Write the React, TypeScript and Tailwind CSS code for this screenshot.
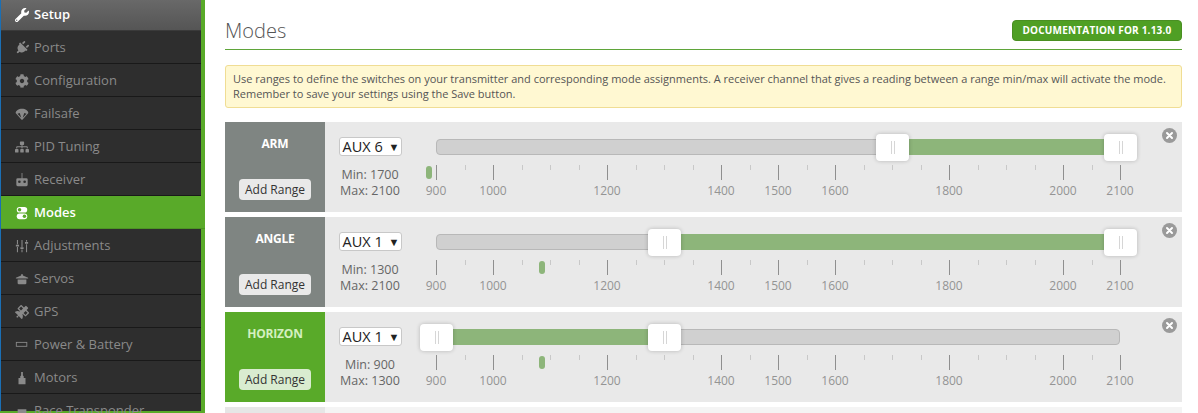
import { FaWrench, FaPlug, FaCog, FaSitemap, FaSatellite } from "react-icons/fa";
import type { ReactNode } from "react";

const NAV = [
  { label: "Setup", state: "top" },
  { label: "Ports" },
  { label: "Configuration" },
  { label: "Failsafe" },
  { label: "PID Tuning" },
  { label: "Receiver" },
  { label: "Modes", state: "active" },
  { label: "Adjustments" },
  { label: "Servos" },
  { label: "GPS" },
  { label: "Power & Battery" },
  { label: "Motors" },
  { label: "Race Transponder" },
];

function NavIcon({ label }: { label: string }) {
  const cls = "w-[14px] h-[14px]";
  const map: Record<string, ReactNode> = {
    Setup: <FaWrench className={cls} />,
    Ports: <FaPlug className={`${cls} rotate-45`} />,
    Configuration: <FaCog className={cls} />,
    Failsafe: (
      <svg className={cls} viewBox="0 0 16 16" fill="currentColor">
        <path d="M8 2C4 2 1 4.300 .7 6.800L7.500 14.500h1L15.300 6.800C15 4.300 12 2 8 2zM2.800 7.800l2.600-.9 1.800 5.300zM13.200 7.800l-4.400 4.400 1.800-5.300z" />
      </svg>
    ),
    "PID Tuning": <FaSitemap className={cls} />,
    Receiver: (
      <svg className={cls} viewBox="0 0 16 16" fill="currentColor">
        <path d="M7.500 0h1v6H13a1.500 1.500 0 0 1 1.500 1.500v6A1.500 1.500 0 0 1 13 15H3a1.500 1.500 0 0 1-1.500-1.500v-6A1.500 1.500 0 0 1 3 6h4.500z" />
        <circle cx="5" cy="10" r="1.500" fill="#2e2e2e" />
        <circle cx="11" cy="10" r="1.500" fill="#2e2e2e" />
      </svg>
    ),
    Modes: (
      <svg className={cls} viewBox="0 0 16 16" fill="currentColor">
        <rect x="2" y="1" width="12" height="6.500" rx="3.250" />
        <rect x="2" y="8.500" width="12" height="6.500" rx="3.250" />
        <circle cx="5.200" cy="4.250" r="2" fill="#59aa29" />
        <circle cx="10.800" cy="11.750" r="2" fill="#59aa29" />
      </svg>
    ),
    Adjustments: (
      <svg className={cls} viewBox="0 0 16 16" fill="currentColor">
        <path d="M2.200 1h1.200v5h-1.200zM1 6.500h3.600v2H1zM2.200 9h1.200v6h-1.200zM7.400 1h1.200v8h-1.200zM6.200 9.500h3.600v2H6.200zM7.400 12h1.200v3h-1.200zM12.600 1h1.200v2h-1.200zM11.400 3.500H15v2h-3.600zM12.600 6h1.200v9h-1.200z" />
      </svg>
    ),
    Servos: (
      <svg className={cls} viewBox="0 0 16 16" fill="currentColor">
        <path d="M7 2.500h2v1.500l6 2.500v1H1v-1l6-2.500zM3 8.500h10v4.500l-1 1H4l-1-1z" />
      </svg>
    ),
    GPS: <FaSatellite className={cls} />,
    "Power & Battery": (
      <svg className={cls} viewBox="0 0 16 16" fill="none" stroke="currentColor" strokeWidth="1">
        <rect x="1.500" y="5" width="12" height="4.500" />
      </svg>
    ),
    Motors: (
      <svg className={cls} viewBox="0 0 16 16" fill="currentColor">
        <path d="M7 1h2v4l1 1v2h2v7H4V8h2V6l1-1z" />
      </svg>
    ),
    "Race Transponder": (
      <svg className={cls} viewBox="0 0 16 16" fill="currentColor">
        <path d="M3 6h10v6H3z" />
      </svg>
    ),
  };
  return <span className="flex justify-center w-[15px] shrink-0 mr-[5px]">{map[label]}</span>;
}

function Sidebar() {
  return (
    <nav className="w-[205px] shrink-0 h-[413px] overflow-hidden bg-[#59aa29] pr-[4px]">
      <div className="border-l border-[#1a6fb5] h-full bg-[#2e2e2e] -mt-[2px]">
        {NAV.map((item) => {
          const active = item.state === "active";
          const top = item.state === "top";
          return (
            <div
              key={item.label}
              className={`h-[33px] flex items-center pl-[13px] pt-[1px] text-[13px] border-b ${
                active
                  ? "bg-[#59aa29] text-white border-[#4d9424] -mr-[4px]"
                  : top
                    ? "bg-gradient-to-b from-[#6a6a6a] to-[#555555] text-white font-semibold border-[#3a3a3a]"
                    : "text-[#8a8a8a] border-[#191919]"
              }`}
            >
              <NavIcon label={item.label} />
              <span className={active ? "font-semibold" : ""}>{item.label}</span>
            </div>
          );
        })}
      </div>
    </nav>
  );
}

const TICK_MAJOR = [900, 1000, 1200, 1400, 1500, 1600, 1800, 2000, 2100];
const TICK_MINOR = [950, 1050, 1100, 1150, 1250, 1300, 1350, 1450, 1550, 1650, 1700, 1750, 1850, 1900, 1950, 2050];

const toPct = (v: number) => `${((v - 900) / 1200) * 100}%`;

function Handle({ value }: { value: number }) {
  return (
    <div
      className="absolute top-[-5px] w-[33px] h-[27px] -ml-[16px] bg-white rounded-[4px] shadow-[0_0_4px_rgba(0,0,0,0.22)] flex items-center justify-center gap-[2px]"
      style={{ left: toPct(value) }}
    >
      <span className="w-px h-[13px] bg-[#d6d6d6]" />
      <span className="w-px h-[13px] bg-[#d6d6d6]" />
    </div>
  );
}

function RangeSlider({ min, max, marker }: { min: number; max: number; marker: number }) {
  return (
    <div className="relative w-[684px] ml-[26px] mt-[17px] shrink-0">
      <div className="relative h-[16px] rounded-[4px] bg-[#d0d0d0] border border-[#b8b8b8]">
        <div
          className="absolute -top-px -bottom-px bg-[#8db57a]"
          style={{ left: toPct(min), width: `${((max - min) / 1200) * 100}%` }}
        />
      </div>
      <Handle value={min} />
      <Handle value={max} />
      <div className="relative h-[40px] mt-[4px]">
        {TICK_MINOR.map((v) => (
          <span key={v} className="absolute top-[6px] w-px h-[5px] bg-[#c8c8c8]" style={{ left: toPct(v) }} />
        ))}
        {TICK_MAJOR.map((v) => (
          <span key={v} className="absolute top-[6px] w-px h-[15px] bg-[#8f8f8f]" style={{ left: toPct(v) }} />
        ))}
        {TICK_MAJOR.map((v) => (
          <span
            key={v}
            className="absolute top-[24px] -translate-x-1/2 text-[12px] leading-[16px] text-[#949494]"
            style={{ left: toPct(v) }}
          >
            {v}
          </span>
        ))}
        <span
          className="absolute top-[7px] -ml-[3px] w-[6px] h-[13px] rounded-[3px] bg-[#8db57a]"
          style={{ left: toPct(marker) }}
        />
      </div>
    </div>
  );
}

function ModeRow({ name, aux, min, max, marker, active }: { name: string; aux: string; min: number; max: number; marker: number; active?: boolean }) {
  return (
    <div className="relative flex h-[90px] bg-[#e9e9e9] mb-[5px]">
      <div className={`w-[100px] shrink-0 flex flex-col items-center ${active ? "bg-[#59aa29]" : "bg-[#7f8582]"}`}>
        <div className={`mt-[14px] h-[16px] leading-[16px] text-[12px] font-bold tracking-[-0.2px] ${active ? "text-[#d4f0c0]" : "text-white"}`}>{name}</div>
        <button className={`mt-[27px] h-[21px] w-[72px] rounded-[4px] text-[12px] text-[#333] ${active ? "bg-[#d9ecd0]" : "bg-[#e9e9e9]"}`}>
          Add Range
        </button>
      </div>
      <div className="w-[80px] ml-[5px] shrink-0 flex flex-col items-center">
        <div className="mt-[15px] h-[19px] w-[63px] border border-[#c8c8c8] rounded-[3px] bg-white text-[14.500px] leading-[17px] text-[#222] pl-[3px] whitespace-nowrap">
          {aux} <span className="ml-[2px] text-[11px] align-[1px]">▼</span>
        </div>
        <div className="mt-[11px] text-[12.500px] leading-[16px] text-[#666] text-center">
          <div>Min: {min}</div>
          <div>Max: {max}</div>
        </div>
      </div>
      <RangeSlider min={min} max={max} marker={marker} />
      <svg className="absolute top-[6px] right-[5px] w-[15px] h-[15px]" viewBox="0 0 15 15">
        <circle cx="7.500" cy="7.500" r="7.500" fill="#9a9a9a" />
        <path d="M5 5l5 5M10 5l-5 5" stroke="#fff" strokeWidth="2" strokeLinecap="round" />
      </svg>
    </div>
  );
}

export default function App() {
  return (
    <div className="flex w-[1198px] h-[413px] overflow-hidden bg-white font-['Open_Sans',sans-serif]">
      <Sidebar />
      <main className="flex-1 pl-[20px] pr-[16px] min-w-0">
        <div className="h-[50px] border-b border-[#5fa53a] flex items-center justify-between">
          <h1 className="text-[20px] font-light text-[#555] mt-[11px] pt-[2px] leading-[24px]">Modes</h1>
          <a className="h-[21px] w-[170px] mt-[11px] border border-[#4a8f22] flex items-center justify-center rounded-[4px] bg-[#4f9f24] text-white text-[10px] tracking-[0.2px] font-bold whitespace-nowrap">
            DOCUMENTATION FOR 1.13.0
          </a>
        </div>
        <div className="mt-[15px] h-[43px] border border-[#f0dd94] rounded-[3px] bg-[#fff8d2] px-[7px] pt-[5px] text-[11px] leading-[15px] text-[#555] whitespace-nowrap">
          <div>Use ranges to define the switches on your transmitter and corresponding mode assignments. A receiver channel that gives a reading between a range min/max will activate the mode.</div>
          <div>Remember to save your settings using the Save button.</div>
        </div>
        <div className="mt-[14px]">
          <ModeRow name="ARM" aux="AUX 6" min={1700} max={2100} marker={888} />
          <ModeRow name="ANGLE" aux="AUX 1" min={1300} max={2100} marker={1086} />
          <ModeRow name="HORIZON" aux="AUX 1" min={900} max={1300} marker={1086} active />
          <div className="h-[20px] bg-[#f4f4f4] flex"><div className="w-[100px] bg-[#e6e6e6]" /></div>
        </div>
      </main>
    </div>
  );
}
